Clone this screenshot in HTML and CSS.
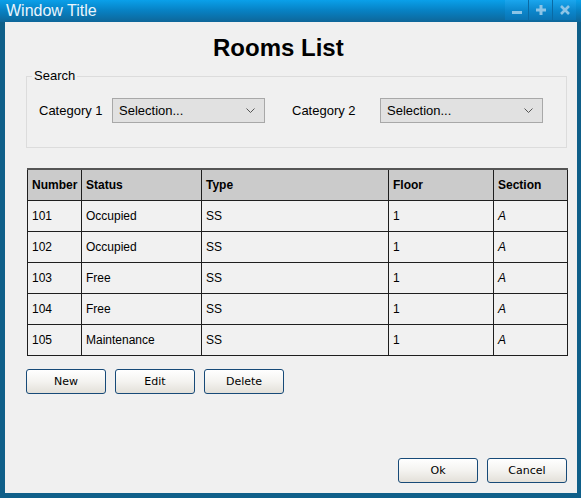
FILE: index.html
```html
<!DOCTYPE html>
<html>
<head>
<meta charset="utf-8">
<link rel="stylesheet" href="styles.css">
</head>
<body>
<div class="window">
  <div class="titlebar">
    <span class="title">Window Title</span>
    <div class="controls">
      <span class="ctrl"><svg width="12" height="12" viewBox="0 0 12 12"><rect x="1" y="7" width="10" height="3" fill="#8cc4e6"/></svg></span>
      <span class="ctrl"><svg width="12" height="12" viewBox="0 0 12 12"><path d="M4.5 1h3v3.5H11v3H7.5V11h-3V7.5H1v-3h3.5z" fill="#8cc4e6"/></svg></span>
      <span class="ctrl"><svg width="12" height="12" viewBox="0 0 12 12"><path d="M2 2l8 8M10 2l-8 8" stroke="#8cc4e6" stroke-width="2.6"/></svg></span>
    </div>
  </div>
  <div class="content">
    <h1 class="heading">Rooms List</h1>
    <fieldset class="search">
      <legend class="search-legend">Search</legend>
      <div class="search-row">
        <label class="lbl lbl1">Category 1</label>
        <div class="select sel1"><span>Selection...</span><svg class="chev" width="9" height="6" viewBox="0 0 9 6"><path d="M0.5 0.5L4.5 4.5L8.5 0.5" fill="none" stroke="#555" stroke-width="1"/></svg></div>
        <label class="lbl lbl2">Category 2</label>
        <div class="select sel2"><span>Selection...</span><svg class="chev" width="9" height="6" viewBox="0 0 9 6"><path d="M0.5 0.5L4.5 4.5L8.5 0.5" fill="none" stroke="#555" stroke-width="1"/></svg></div>
      </div>
    </fieldset>
    <table class="rooms">
      <colgroup>
        <col class="c1"><col class="c2"><col class="c3"><col class="c4"><col class="c5">
      </colgroup>
      <thead>
        <tr><th>Number</th><th>Status</th><th>Type</th><th>Floor</th><th>Section</th></tr>
      </thead>
      <tbody>
        <tr><td>101</td><td>Occupied</td><td>SS</td><td>1</td><td class="it">A</td></tr>
        <tr><td>102</td><td>Occupied</td><td>SS</td><td>1</td><td class="it">A</td></tr>
        <tr><td>103</td><td>Free</td><td>SS</td><td>1</td><td class="it">A</td></tr>
        <tr><td>104</td><td>Free</td><td>SS</td><td>1</td><td class="it">A</td></tr>
        <tr><td>105</td><td>Maintenance</td><td>SS</td><td>1</td><td class="it">A</td></tr>
      </tbody>
    </table>
    <div class="actions">
      <button class="btn">New</button>
      <button class="btn">Edit</button>
      <button class="btn">Delete</button>
    </div>
    <div class="footer">
      <button class="btn">Ok</button>
      <button class="btn">Cancel</button>
    </div>
  </div>
</div>
</body>
</html>
```
FILE: styles.css
```css
html, body {
  margin: 0;
  padding: 0;
  background: #ffffff;
}
body {
  font-family: "Liberation Sans", Arial, sans-serif;
}
.window {
  width: 581px;
  height: 498px;
  background: #0f5f89;
  display: flex;
  flex-direction: column;
  box-sizing: border-box;
  padding-bottom: 5px;
}
.titlebar {
  height: 22px;
  flex: 0 0 22px;
  background: linear-gradient(to bottom, #0aa0ea 0%, #0783c6 45%, #0e6699 100%);
  display: flex;
  align-items: flex-start;
  justify-content: space-between;
  padding-left: 6px;
  box-sizing: border-box;
}
.title {
  color: #eaf5fc;
  font-size: 16px;
  line-height: 21px;
}
.controls {
  display: flex;
  gap: 1px;
  margin-right: 5px;
  background: #0a6aa4;
}
.ctrl {
  width: 23px;
  height: 20px;
  display: flex;
  align-items: center;
  justify-content: center;
  background: linear-gradient(to bottom, #1aa6ee 0%, #0b86cb 55%, #0a74b4 100%);
}
.content {
  flex: 1;
  margin: 0 4px 0 5px;
  background: #f0f0f0;
  display: flex;
  flex-direction: column;
  padding: 0 10px 10px 21px;
  box-sizing: border-box;
}
.heading {
  margin: 12px 0 0 187px;
  font-size: 24px;
  line-height: 28px;
  font-weight: bold;
  color: #000;
}
.search {
  margin: 7px 0 0 0;
  width: 541px;
  box-sizing: border-box;
  border: 1px solid #dcdcdc;
  padding: 15px 0 24px 12px;
}
.search-legend {
  margin-left: -7px;
  padding: 0 2px;
  font-size: 13px;
  line-height: 14px;
  color: #000;
}
.search-row {
  display: flex;
  align-items: center;
}
.lbl {
  font-size: 13px;
  color: #000;
}
.lbl1 { width: 73px; }
.lbl2 { width: 88px; margin-left: 27px; }
.select {
  height: 25px;
  box-sizing: border-box;
  background: #e1e1e1;
  border: 1px solid #a8a8a8;
  display: flex;
  align-items: center;
  justify-content: space-between;
  padding: 0 9px 0 6px;
  font-size: 13px;
  color: #000;
}
.sel1 { width: 153px; }
.sel2 { width: 163px; }
.rooms {
  margin: 20px 0 0 1px;
  width: 540px;
  border-collapse: collapse;
  table-layout: fixed;
  font-size: 12px;
  background: #f1f1f1;
  border: 1px solid #2a2a2a;
}
.c1 { width: 54px; }
.c2 { width: 120px; }
.c3 { width: 187px; }
.c4 { width: 105px; }
.c5 { width: 74px; }
.rooms th, .rooms td {
  border: 1px solid #1e1e1e;
  text-align: left;
  padding: 0 0 0 4px;
  color: #000;
  white-space: nowrap;
}
.rooms thead tr {
  border-top: 2px solid #555;
}
.rooms th {
  height: 30px;
  background: #cbcbcb;
  font-weight: bold;
}
.rooms td {
  height: 30px;
}
.rooms td.it { font-style: italic; }
.actions {
  display: flex;
  gap: 9px;
  margin-top: 13px;
}
.btn {
  width: 80px;
  height: 25px;
  box-sizing: border-box;
  border: 1px solid #174a78;
  border-radius: 3px;
  background: linear-gradient(to bottom, #ffffff 0%, #f4f3f0 50%, #e3e0d9 100%);
  font-family: "DejaVu Sans", "Liberation Sans", sans-serif;
  font-size: 11px;
  color: #000;
  padding: 0;
}
.footer {
  margin-top: auto;
  display: flex;
  justify-content: flex-end;
  gap: 9px;
}
```
